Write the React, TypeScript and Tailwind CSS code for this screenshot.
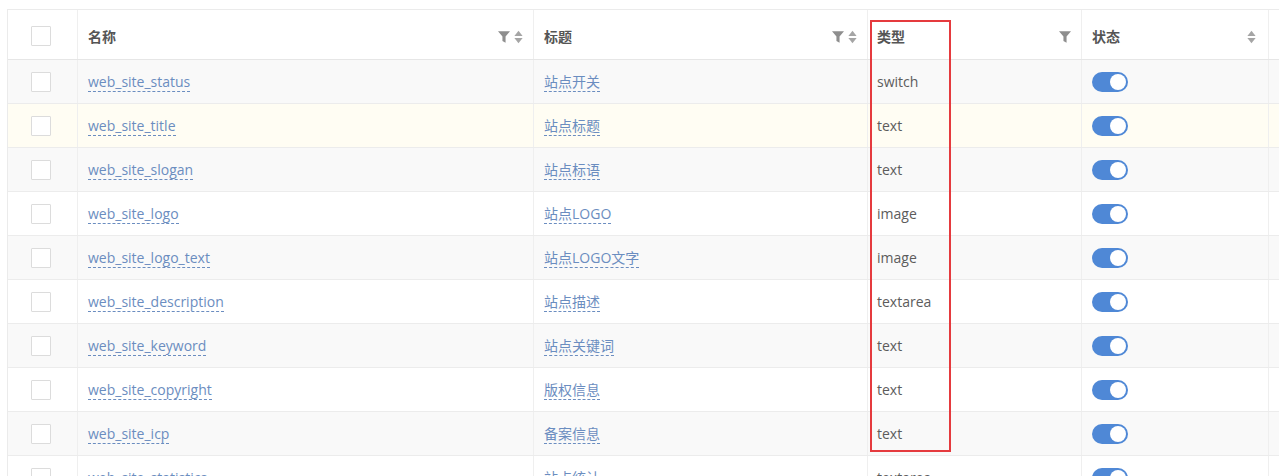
import React from "react"

const rows = [
  { name: "web_site_status", title: "站点开关", type: "switch" },
  { name: "web_site_title", title: "站点标题", type: "text" },
  { name: "web_site_slogan", title: "站点标语", type: "text" },
  { name: "web_site_logo", title: "站点LOGO", type: "image" },
  { name: "web_site_logo_text", title: "站点LOGO文字", type: "image" },
  { name: "web_site_description", title: "站点描述", type: "textarea" },
  { name: "web_site_keyword", title: "站点关键词", type: "text" },
  { name: "web_site_copyright", title: "版权信息", type: "text" },
  { name: "web_site_icp", title: "备案信息", type: "text" },
  { name: "web_site_statistics", title: "站点统计", type: "textarea" },
]

const FilterIcon = () => (
  <svg width="12" height="12" viewBox="0 0 10 10" className="fill-[#8e8e8e]">
    <path d="M0 0.3h10L6.3 4.6V9.7L3.7 8.4V4.6z" />
  </svg>
)

const SortIcon = () => (
  <svg width="9" height="14" viewBox="0 0 9 14" className="fill-[#a5a5a5]">
    <path d="M4.5 0.8L8.6 6H0.4z" />
    <path d="M4.5 13.2L8.6 8H0.4z" />
  </svg>
)

const Checkbox = () => (
  <div className="w-5 h-5 border border-[#dcdcdc] bg-white rounded-[1px]" />
)

const Switch = () => (
  <div className="w-9 h-5 rounded-full bg-[#4f88d6] relative">
    <div className="absolute right-[2px] top-[2px] w-4 h-4 rounded-full bg-white" />
  </div>
)

const cols = ["w-[70px]", "w-[456px]", "w-[334px]", "w-[214px]", "w-[187px]"]

export default function App() {
  return (
    <div
      className="relative bg-white w-[1279px] h-[476px] overflow-hidden pt-[9px] pl-[7px] text-[14px]"
      style={{ fontFamily: '"Open Sans", "Noto Sans CJK SC", sans-serif' }}
    >
      <div className="border-l border-t border-[#ebebeb] w-[1300px]">
        <div className="flex h-[50px] border-b border-[#e6e6e6] text-[#555] font-bold">
          <div className={`${cols[0]} shrink-0 border-r border-[#efefef] flex items-center justify-center pr-[3px] pt-[2px]`}>
            <Checkbox />
          </div>
          <div className={`${cols[1]} shrink-0 border-r border-[#efefef] flex items-center px-[10px] pt-[4px]`}>
            <span className="flex-1">名称</span>
            <FilterIcon />
            <span className="ml-[4px] flex"><SortIcon /></span>
          </div>
          <div className={`${cols[2]} shrink-0 border-r border-[#efefef] flex items-center px-[10px] pt-[4px]`}>
            <span className="flex-1">标题</span>
            <FilterIcon />
            <span className="ml-[4px] flex"><SortIcon /></span>
          </div>
          <div className={`${cols[3]} shrink-0 border-r border-[#efefef] flex items-center pl-[9px] pr-[10px] pt-[4px]`}>
            <span className="flex-1">类型</span>
            <FilterIcon />
          </div>
          <div className={`${cols[4]} shrink-0 border-r border-[#efefef] flex items-center px-[10px] pt-[4px]`}>
            <span className="flex-1">状态</span>
            <span className="mr-[2px] flex"><SortIcon /></span>
          </div>
          <div className="flex-1" />
        </div>
        {rows.map((r, i) => {
          const bg = i === 1 ? "bg-[#fffdf3]" : i % 2 === 0 ? "bg-[#f9f9f9]" : "bg-white"
          return (
            <div key={r.name} className={`flex h-[44px] border-b border-[#ececec] ${bg}`}>
              <div className={`${cols[0]} shrink-0 border-r border-[#efefef] flex items-center justify-center pr-[3px]`}>
                <Checkbox />
              </div>
              <div className={`${cols[1]} shrink-0 border-r border-[#efefef] flex items-center px-[10px]`}>
                <span className="text-[#6b8dc0] border-b border-dashed border-[#6b8dc0] leading-[19px]">{r.name}</span>
              </div>
              <div className={`${cols[2]} shrink-0 border-r border-[#efefef] flex items-center px-[10px]`}>
                <span className="text-[#6b8dc0] border-b border-dashed border-[#6b8dc0] leading-[19px]">{r.title}</span>
              </div>
              <div className={`${cols[3]} shrink-0 border-r border-[#efefef] flex items-center pl-[9px] pr-[10px] text-[#5c5c5c]`}>
                {r.type}
              </div>
              <div className={`${cols[4]} shrink-0 border-r border-[#efefef] flex items-center px-[10px]`}>
                <Switch />
              </div>
              <div className="flex-1" />
            </div>
          )
        })}
      </div>
      <div className="absolute left-[870px] top-[20px] w-[81px] h-[432px] border-2 border-[#e53a3e] pointer-events-none" />
    </div>
  )
}
